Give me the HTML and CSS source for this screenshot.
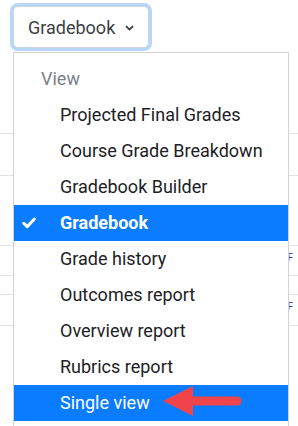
FILE: index.html
```html
<!doctype html>
<html lang="en-US">

<head>
    <meta charset="utf-8" />
    <title>Gradebook</title>

    <link rel="stylesheet" href="styles.css">
</head>

<body>
    <div class="toolbar">
        <button class="select-btn">
            Gradebook
            <svg class="chevron" width="9" height="6" viewBox="0 0 9 6">
                <path d="M1 1.2 L4.5 4.6 L8 1.2" fill="none" stroke="#343a40" stroke-width="1.8" />
            </svg>
        </button>
    </div>

    <div class="grades">
        <div class="grade-row r1"></div>
        <div class="grade-row r2"></div>
        <div class="grade-row r3"></div>
        <div class="grade-row r4"><span class="link">F</span></div>
        <div class="grade-row r5"></div>
        <div class="grade-row r6"><span class="link">F</span></div>
    </div>

    <div class="menu">
        <div class="menu-header">View</div>
        <div class="menu-item">Projected Final Grades</div>
        <div class="menu-item">Course Grade Breakdown</div>
        <div class="menu-item">Gradebook Builder</div>
        <div class="menu-item active">
            <svg class="check" width="14" height="12" viewBox="0 0 14 12">
                <path d="M1.8 6.3 L5.2 9.6 L12.2 2.2" fill="none" stroke="#fff" stroke-width="3" stroke-linecap="round" stroke-linejoin="round" />
            </svg>
            Gradebook
        </div>
        <div class="menu-item">Grade history</div>
        <div class="menu-item">Outcomes report</div>
        <div class="menu-item">Overview report</div>
        <div class="menu-item">Rubrics report</div>
        <div class="menu-item selected">
            Single view
            <svg class="arrow" width="80" height="32" viewBox="0 0 80 32">
                <path d="M0 16 L30 1 L30 31 Z" fill="#f0434a" />
                <line x1="28" y1="16" x2="74" y2="16" stroke="#f0434a" stroke-width="9" stroke-linecap="round" />
            </svg>
        </div>
    </div>
</body>

</html>
```

FILE: styles.css
```css
body {
    margin: 0;
    height: 426px;
    font-family: Roboto, "Liberation Sans", sans-serif;
    background-color: #fff;
    overflow: hidden;
}

.toolbar {
    height: 52px;
    padding: 6px 0 0 13px;
    box-sizing: border-box;
}

.select-btn {
    display: flex;
    align-items: center;
    gap: 10px;
    height: 42px;
    width: 136px;
    padding: 0 0 0 14px;
    border: 1px solid #cfd4da;
    border-radius: 5px;
    background-color: #fff;
    box-shadow: 0 0 0 3px #b6d6fb;
    font-family: Roboto, "Liberation Sans", sans-serif;
    font-size: 18px;
    color: #3b3f44;
}

.chevron {
    margin-top: 2px;
}

.grade-row {
    border-bottom: 1px solid #dee2e6;
    box-sizing: border-box;
    text-align: right;
    font-size: 10px;
    color: #4b2a9a;
    padding-right: 5px;
}

.r1 { height: 82px; }
.r2 { height: 42px; }
.r3 { height: 70px; }
.r4 { height: 30px; }
.r5 { height: 19px; }
.r6 { height: 31px; }

.link {
    display: inline-block;
    margin-top: 6px;
}

.menu {
    position: absolute;
    top: 52px;
    left: 13px;
    width: 276px;
    height: 374px;
    box-sizing: border-box;
    padding-top: 8px;
    border: 1px solid #d2d2d2;
    border-bottom: none;
    background-color: #fff;
}

.menu-header {
    height: 36px;
    line-height: 36px;
    padding-left: 27px;
    font-size: 18px;
    color: #7b8288;
}

.menu-item {
    position: relative;
    height: 36px;
    line-height: 36px;
    padding-left: 46px;
    font-size: 18px;
    color: #1d2125;
}

.menu-item.active {
    background-color: #0a7cff;
    color: #fff;
    font-weight: bold;
}

.menu-item.selected {
    background-color: #0a7cff;
    color: #fff;
}

.check {
    position: absolute;
    left: 8px;
    top: 12px;
}

.arrow {
    position: absolute;
    left: 149px;
    top: 0px;
}
```
